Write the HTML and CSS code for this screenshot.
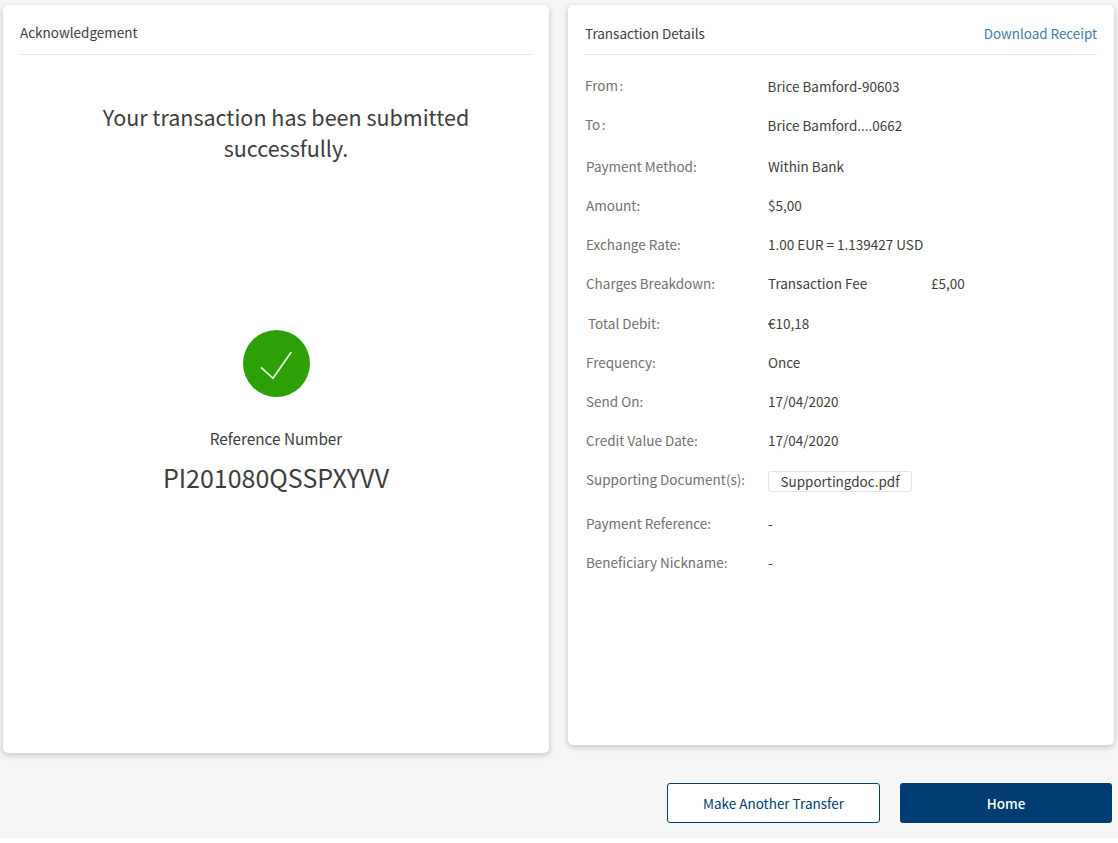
FILE: index.html
```html
<!DOCTYPE html>
<html lang="en">
<head>
<meta charset="utf-8">
<title>Transaction submitted</title>
<link rel="stylesheet" href="styles.css">
</head>
<body>
<main class="page">
  <div class="cards">
    <section class="card card-ack">
      <header class="card-head card-head-ack"><h2 class="card-title">Acknowledgement</h2></header>
      <p class="ack-message">Your transaction has been submitted successfully.</p>
      <svg class="ack-icon" width="67" height="67" viewBox="0 0 67 67" aria-hidden="true">
        <circle cx="33.5" cy="33.5" r="33.5" fill="#2ca004"/>
        <path d="M18 37.3 L30 48.3 L48.3 22" fill="none" stroke="#e6f2df" stroke-width="1.7"/>
      </svg>
      <p class="ref-label">Reference Number</p>
      <p class="ref-number">PI201080QSSPXYVV</p>
    </section>
    <section class="card card-details">
      <header class="card-head card-head-details">
        <h2 class="card-title">Transaction Details</h2>
        <a class="download" href="#">Download Receipt</a>
      </header>
      <dl class="rows">
        <div class="row"><dt class="shift-left">From :</dt><dd>Brice Bamford-90603</dd></div>
        <div class="row"><dt class="shift-left">To :</dt><dd>Brice Bamford....0662</dd></div>
        <div class="row gap-2"><dt>Payment Method:</dt><dd>Within Bank</dd></div>
        <div class="row"><dt>Amount:</dt><dd>$5,00</dd></div>
        <div class="row"><dt>Exchange Rate:</dt><dd>1.00 EUR = 1.139427 USD</dd></div>
        <div class="row"><dt>Charges Breakdown:</dt><dd class="charges"><span class="charge-name">Transaction Fee</span><span>£5,00</span></dd></div>
        <div class="row gap-1"><dt class="shift-right">Total Debit:</dt><dd>€10,18</dd></div>
        <div class="row"><dt>Frequency:</dt><dd>Once</dd></div>
        <div class="row"><dt>Send On:</dt><dd>17/04/2020</dd></div>
        <div class="row"><dt>Credit Value Date:</dt><dd>17/04/2020</dd></div>
        <div class="row"><dt>Supporting Document(s):</dt><dd class="doc-cell"><span class="doc-chip">Supportingdoc.pdf</span></dd></div>
        <div class="row gap-5"><dt>Payment Reference:</dt><dd>-</dd></div>
        <div class="row"><dt>Beneficiary Nickname:</dt><dd>-</dd></div>
      </dl>
    </section>
  </div>
  <div class="actions">
    <a class="btn btn-outline" href="#">Make Another Transfer</a>
    <a class="btn btn-solid" href="#">Home</a>
  </div>
</main>
</body>
</html>
```

FILE: styles.css
```css
* { box-sizing: border-box; }
html, body { margin: 0; padding: 0; background: #fff; }
body {
  font-family: "Noto Sans CJK SC", "Noto Sans", sans-serif;
  color: #3d3d3d;
  font-size: 13.5px;
}
.page { background: #f6f6f6; height: 838px; }
.cards {
  display: flex;
  align-items: flex-start;
  gap: 19px;
  padding: 5px 4px 0 3px;
}
.card {
  width: 546px;
  flex: none;
  background: #fff;
  border-radius: 5px;
  box-shadow: 0 2px 6px rgba(0, 0, 0, 0.22);
  padding: 0 17px;
}
.card-ack { height: 748px; display: flex; flex-direction: column; align-items: center; }
.card-details { height: 740px; }
.card-head {
  display: flex;
  justify-content: space-between;
  align-items: center;
  align-self: stretch;
  height: 50px;
  border-bottom: 1px solid #e6e6e6;
}
.card-head-ack { padding-top: 4px; }
.card-head-details { padding-top: 6px; }
.card-title { margin: 0; font-size: 13.5px; line-height: 20px; font-weight: 400; color: #3d3d3d; }
.download { color: #3f7cac; text-decoration: none; font-size: 13.4px; line-height: 20px; }
.ack-message {
  margin: 46px 0 0;
  width: 440px;
  padding-left: 20px;
  text-align: center;
  font-size: 21.5px;
  line-height: 31px;
  color: #3d3d3d;
}
.ack-icon { display: block; margin-top: 167px; }
.ref-label { margin: 30px 0 0; font-size: 15.3px; line-height: 22px; color: #3d3d3d; }
.ref-number { margin: 10px 0 0; font-size: 25px; line-height: 36px; color: #3d3d3d; }
.rows { margin: 0; padding-top: 11px; }
.row {
  display: flex;
  align-items: center;
  height: 39px;
  padding-left: 1px;
}
.gap-1 { margin-top: 1px; }
.gap-2 { margin-top: 2px; }
.gap-5 { margin-top: 5px; }
.row dt { width: 182px; flex: none; color: #707070; line-height: 20px; }
.row dd { margin: 0; color: #3d3d3d; line-height: 20px; }
.row .shift-left { position: relative; top: -1px; margin-left: -1px; width: 182.6px; word-spacing: -1.5px; }
.row .shift-right { margin-left: 2px; width: 180px; }
.charges { display: flex; }
.charge-name { width: 163px; }
.row .doc-cell { padding-top: 6px; }
.doc-chip {
  display: block;
  width: 144px;
  height: 21px;
  line-height: 19px;
  text-align: center;
  background: #fff;
  border: 1px solid #e3e3e3;
  border-radius: 3px;
}
.actions {
  display: flex;
  justify-content: flex-end;
  gap: 20px;
  padding: 30px 6px 0 0;
}
.btn {
  display: flex;
  align-items: center;
  justify-content: center;
  height: 40px;
  border-radius: 3px;
  text-decoration: none;
  font-size: 13.5px;
}
.btn-outline { width: 213px; background: #fff; border: 1px solid #003d73; color: #003d73; }
.btn-solid { width: 212px; background: #003d73; color: #fff; font-weight: 500; }
```
